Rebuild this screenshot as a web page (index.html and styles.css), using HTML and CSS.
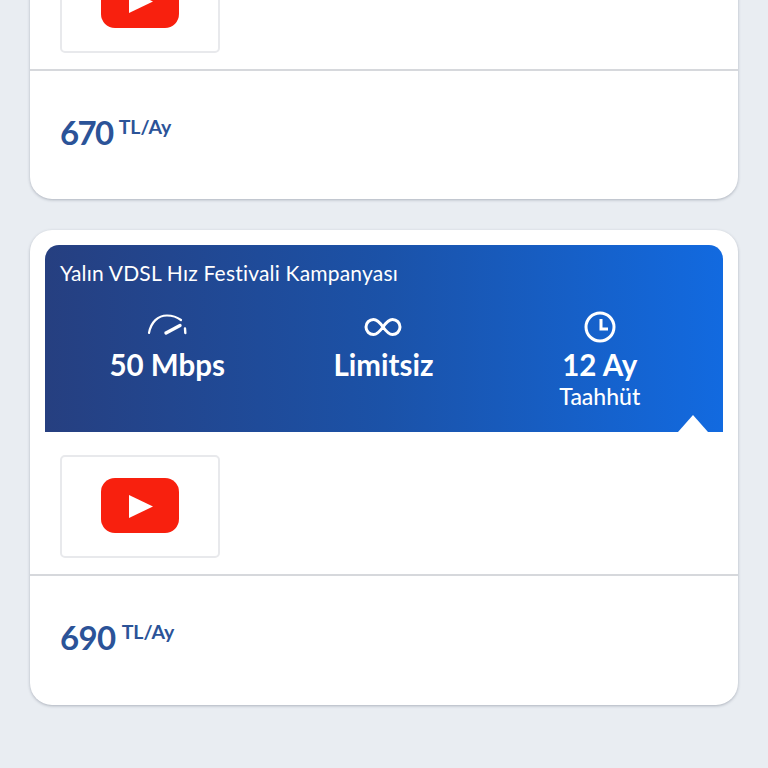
FILE: index.html
```html
<!DOCTYPE html>
<html lang="tr">
<head>
<meta charset="utf-8">
<title>Kampanyalar</title>
<link rel="stylesheet" href="styles.css">
</head>
<body>
<main class="list">
  <section class="card card-cut">
    <div class="apps">
      <div class="app-box">
        <svg class="yt" viewBox="0 0 78 55"><rect width="78" height="55" rx="14" fill="#f8200e"/><path d="M28 17 L52 28.5 L28 40 Z" fill="#fff"/></svg>
      </div>
    </div>
    <div class="price"><span class="amount">670</span><span class="unit">TL/Ay</span></div>
  </section>

  <section class="card card-full">
    <header class="banner">
      <h2 class="title">Yalın VDSL Hız Festivali Kampanyası</h2>
      <div class="stats">
        <div class="stat">
          <svg class="icon" viewBox="0 0 40 32" fill="none" stroke="#fff" stroke-linecap="round"><path d="M2 22 C4 11 11 4.5 20 4.5 C25 4.5 30 6 34 9" stroke-width="2.2"/><path d="M38 17.5 L38.3 22" stroke-width="2.4"/><path d="M19 22 L33 14.5" stroke-width="3.4"/></svg>
          <div class="value">50 Mbps</div>
        </div>
        <div class="stat">
          <svg class="icon" viewBox="0 0 40 32" fill="none" stroke="#fff" stroke-width="3"><path d="M20 16 C16.5 11 14 8.5 10.5 8.5 C6.3 8.5 3 11.8 3 16 C3 20.2 6.3 23.5 10.5 23.5 C14 23.5 16.5 21 20 16 C23.5 11 26 8.5 29.5 8.5 C33.7 8.5 37 11.8 37 16 C37 20.2 33.7 23.5 29.5 23.5 C26 23.5 23.5 21 20 16 Z"/></svg>
          <div class="value">Limitsiz</div>
        </div>
        <div class="stat">
          <svg class="icon" viewBox="0 0 40 32" fill="none" stroke="#fff"><circle cx="20" cy="16" r="14" stroke-width="3"/><path d="M21 8 V18 H28" stroke-width="3"/></svg>
          <div class="value">12 Ay</div>
          <div class="note">Taahhüt</div>
        </div>
      </div>
      <span class="notch"></span>
    </header>
    <div class="apps">
      <div class="app-box">
        <svg class="yt" viewBox="0 0 78 55"><rect width="78" height="55" rx="14" fill="#f8200e"/><path d="M28 17 L52 28.5 L28 40 Z" fill="#fff"/></svg>
      </div>
    </div>
    <div class="price"><span class="amount amount-wide">690</span><span class="unit">TL/Ay</span></div>
  </section>
</main>
</body>
</html>
```
FILE: styles.css
```css
* { box-sizing: border-box; }
html, body { margin: 0; height: 768px; overflow: hidden; }
body { background: #e9edf2; font-family: "Lato", "Noto Sans", sans-serif; color: #fff; }
.list { display: flex; flex-direction: column; gap: 31px; padding: 0 30px; margin-top: -73px; }
.card { background: #fff; border-radius: 22px; box-shadow: 0 1px 3px rgba(60, 70, 90, .35); overflow: hidden; }
.card-cut { height: 272px; }
.card-full { height: 475px; padding-top: 15px; }
.banner { position: relative; height: 187px; margin: 0 15px; padding: 0 15px; border-radius: 14px 14px 0 0; background: linear-gradient(90deg, #263f80 0%, #1b52a8 50%, #126ae0 100%); }
.title { margin: 0; padding-top: 15px; height: 63px; font-size: 21px; line-height: 26px; font-weight: 400; letter-spacing: .2px; white-space: nowrap; }
.stats { display: grid; grid-template-columns: repeat(3, 1fr); margin-left: -1px; }
.stat { display: flex; flex-direction: column; align-items: center; }
.icon { width: 40px; height: 32px; display: block; margin-top: 3px; }
.value { margin-top: 5px; font-size: 29.5px; line-height: 34px; font-weight: 700; }
.note { font-size: 23px; line-height: 26px; font-weight: 500; margin-top: 1px; }
.notch { position: absolute; right: 15px; bottom: 0; width: 0; height: 0; border-left: 15px solid transparent; border-right: 15px solid transparent; border-bottom: 17px solid #fff; }
.apps { height: 144px; padding: 23px 30px 0; border-bottom: 2px solid #d6d8dc; }
.app-box { width: 160px; height: 103px; padding-bottom: 2px; border: 2px solid #e8e9ec; border-radius: 5px; display: flex; align-items: center; justify-content: center; }
.yt { width: 78px; height: 55px; display: block; }
.price { display: flex; align-items: flex-start; gap: 6px; padding: 41px 30px 0; color: #2b5398; }
.amount { font-size: 33px; line-height: 40px; font-weight: 700; letter-spacing: -1.6px; }
.amount-wide { letter-spacing: -.6px; }
.unit { font-size: 19.5px; line-height: 22px; font-weight: 700; margin-top: 4px; }
```
